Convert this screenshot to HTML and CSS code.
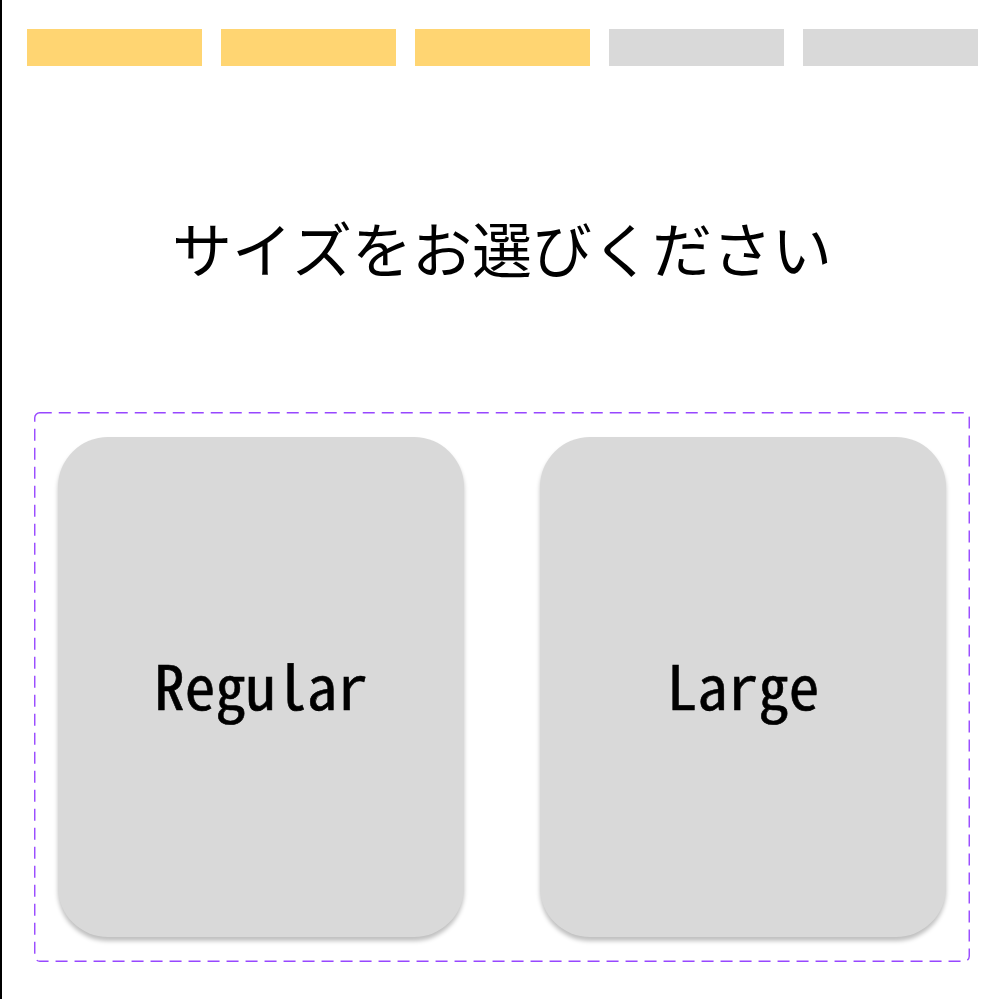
FILE: index.html
```html
<!DOCTYPE html>
<html lang="ja">
<head>
<meta charset="utf-8">
<title>サイズ選択</title>
<link rel="stylesheet" href="styles.css">
</head>
<body>
<div class="page">
  <div class="steps">
    <div class="step done"></div>
    <div class="step done"></div>
    <div class="step done"></div>
    <div class="step"></div>
    <div class="step"></div>
  </div>
  <h1 class="title">サイズをお選びください</h1>
  <div class="options">
    <div class="card">Regular</div>
    <div class="card">Large</div>
  </div>
</div>
</body>
</html>
```

FILE: styles.css
```css
html, body {
  margin: 0;
  padding: 0;
  background: #fff;
}
body {
  width: 998px;
  height: 999px;
  overflow: hidden;
}
.page {
  box-sizing: border-box;
  height: 999px;
  border-left: 2px solid #000;
  display: flex;
  flex-direction: column;
  font-family: "Noto Sans Mono CJK JP", "Noto Sans CJK JP", sans-serif;
  color: #000;
}
.steps {
  display: flex;
  gap: 19px;
  padding: 29px 20px 0 25px;
}
.step {
  width: 175px;
  height: 37px;
  background: #d9d9d9;
}
.step.done {
  background: #ffd572;
}
.title {
  margin: 141px 0 0 0;
  font-size: 60px;
  line-height: 80px;
  font-weight: 400;
  text-align: center;
  padding-left: 4px;
}
.options {
  box-sizing: border-box;
  margin: 125px 28px 0 32px;
  height: 550px;
  background-image: url("data:image/svg+xml,%3Csvg xmlns='http://www.w3.org/2000/svg' width='936' height='550'%3E%3Crect x='0.75' y='0.75' width='934.5' height='548.5' rx='5' fill='none' stroke='%239747ff' stroke-width='1.4' stroke-dasharray='12 7'/%3E%3C/svg%3E");
  background-repeat: no-repeat;
  padding: 25px 24px 24px 24px;
  display: flex;
  gap: 76px;
}
.card {
  flex: 1;
  height: 500px;
  background: #d9d9d9;
  border-radius: 50px;
  box-shadow: 0 4px 4px rgba(0, 0, 0, 0.25);
  display: flex;
  align-items: center;
  justify-content: center;
  font-size: 61px;
  line-height: 1;
  padding-bottom: 8px;
  box-sizing: border-box;
  -webkit-text-stroke: 0.6px #000;
}
```
